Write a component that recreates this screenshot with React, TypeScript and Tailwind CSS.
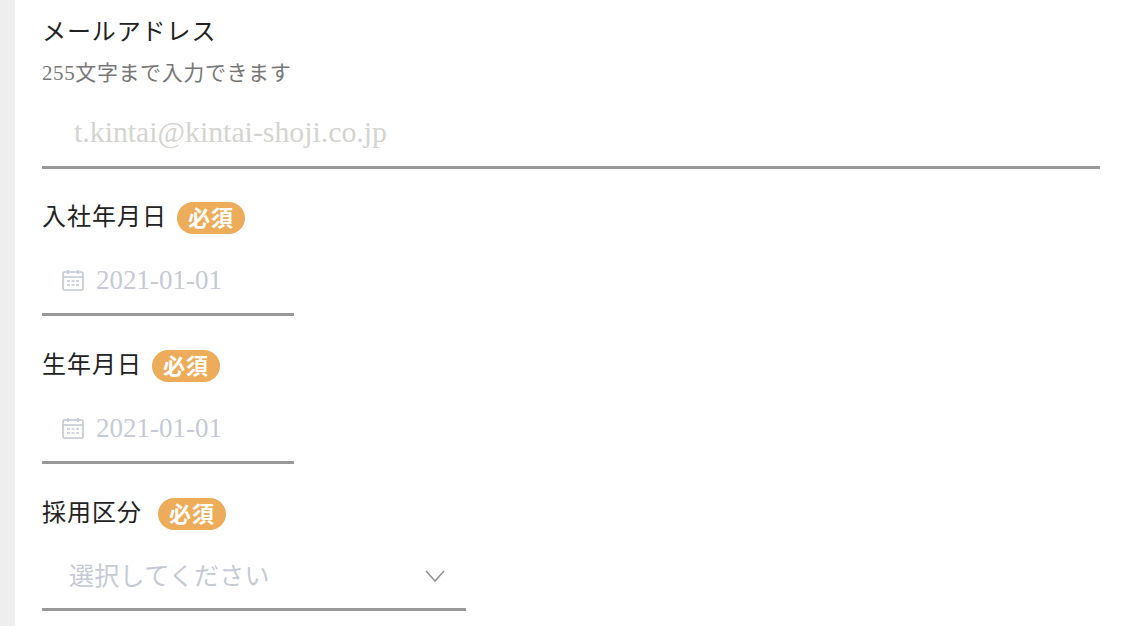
const FONT = "font-['Liberation_Serif','Noto_Sans_CJK_JP',serif]";

function RequiredBadge() {
  return (
    <span className="ml-[10px] flex h-8 w-[68px] items-center justify-center rounded-full bg-[#ecac59] pt-[2px] text-[22px] font-bold leading-none text-white">
      必須
    </span>
  );
}

function CalendarIcon() {
  return (
    <svg width="22" height="22" viewBox="0 0 22 22" fill="none" stroke="#c2c7d3" strokeWidth="1.6">
      <rect x="1" y="3" width="20" height="18" rx="1.5" />
      <path d="M1 8h20M6 1v4M16 1v4" />
      <path d="M5 12h3M9.5 12h3M14 12h3M5 16h3M9.5 16h3M14 16h3" strokeWidth="1.4" />
    </svg>
  );
}

function DateField({ label, top }: { label: string; top: string }) {
  return (
    <div className={top}>
      <div className="flex h-8 items-center text-[24px] leading-none tracking-[1px] text-[#222]">
        <span className="mb-[3px]">{label}</span>
        <RequiredBadge />
      </div>
      <div className="flex h-[82px] w-[252px] items-end gap-[12px] border-b-[3px] border-[#999] pb-[19px] pl-[20px]">
        <span className="mb-[3px]">
          <CalendarIcon />
        </span>
        <span className="text-[27px] leading-[27px] text-[#c5cad6]">2021-01-01</span>
      </div>
    </div>
  );
}

export default function App() {
  return (
    <div className={`flex h-[626px] w-[1133px] overflow-hidden bg-white ${FONT}`}>
      <div className="h-full w-[15px] bg-[#eeeeee]" />
      <main className="w-[1085px] pl-[27px] pt-[16px]">
        <div className="text-[24px] leading-8 tracking-[0.9px] text-[#222]">メールアドレス</div>
        <p className="mt-[10px] text-[21px] leading-[30px] tracking-[0.6px] text-[#777]">255文字まで入力できます</p>
        <div className="flex h-[81px] items-end border-b-[3px] border-[#999] pb-[19px] pl-[32px] text-[29.8px] leading-[30px] text-[#d4d4d0]">
          t.kintai@kintai-shoji.co.jp
        </div>
        <DateField label="入社年月日" top="mt-[33px]" />
        <DateField label="生年月日" top="mt-[34px]" />
        <div className="mt-[34px]">
          <div className="flex h-8 items-center text-[24px] leading-none tracking-[1px] text-[#222]">
            <span className="mb-[3px]">採用区分</span>
            <span className="ml-[6px]">
              <RequiredBadge />
            </span>
          </div>
          <div className="flex h-[81px] w-[424px] items-end justify-between border-b-[3px] border-[#999] pb-[19px] pl-[27px] pr-[21px]">
            <span className="text-[25px] leading-[25px] tracking-[0.3px] text-[#c5cad6]">選択してください</span>
            <svg className="mb-[7px]" width="20" height="12" viewBox="0 0 20 12" fill="none" stroke="#8f8f8f" strokeWidth="1.5">
              <path d="M1 1l9 10 9-10" />
            </svg>
          </div>
        </div>
      </main>
    </div>
  );
}
